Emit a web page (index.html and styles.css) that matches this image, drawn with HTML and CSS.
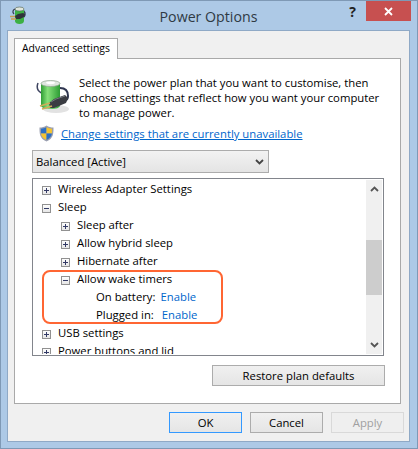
FILE: index.html
```html
<!DOCTYPE html>
<html lang="en">
<head>
    <meta charset="UTF-8">
    <title>Power Options</title>
    <link rel="stylesheet" href="styles.css">
</head>
<body>
    <div class="window">
        <div class="title-bar">
            <svg class="app-icon" width="18" height="18" viewBox="0 0 18 18">
                <path d="M6 3C4 4 3 6 5 8" fill="none" stroke="#3a3f55" stroke-width="1.3"/>
                <path d="M13 4c3 1 4 4 2 7" fill="none" stroke="#3a3f55" stroke-width="1.5"/>
                <path d="M6 3h9v12c0 2-2 3-4.500 3S6 17 6 15z" fill="#3cb043"/>
                <ellipse cx="10.500" cy="3" rx="4.500" ry="2" fill="#dfe5dc" stroke="#5f6f60" stroke-width=".7"/>
                <path d="M6 10l3-2 5-1 2 1-1 3-4 2H7z" fill="#2f3238"/>
                <path d="M1 10.500h5M2 13h5" stroke="#c8a050" stroke-width="1.300"/>
            </svg>
            <span class="title-text">Power Options</span>
            <span class="help-btn">?</span>
            <span class="close-btn">
                <svg width="9" height="9" viewBox="0 0 9 9"><path d="M1 1l7 7M8 1l-7 7" stroke="#fff" stroke-width="1.800"/></svg>
            </span>
        </div>

        <div class="client">
            <div class="tabs">
                <div class="tab">Advanced settings</div>
            </div>

            <div class="panel">
                <div class="intro">
                    <svg class="plan-icon" width="34" height="34" viewBox="0 0 34 34">
                        <defs>
                            <linearGradient id="batt" x1="0" x2="1" y1="0" y2="0">
                                <stop offset="0" stop-color="#2f9e35"/>
                                <stop offset=".35" stop-color="#86e07a"/>
                                <stop offset="1" stop-color="#2c9c34"/>
                            </linearGradient>
                        </defs>
                        <ellipse cx="20" cy="29" rx="13" ry="4" fill="#e2e2e2"/>
                        <path d="M2 3c-1.500 4-.5 8 3.500 10" fill="none" stroke="#3e4460" stroke-width="1.500"/>
                        <path d="M24 8c5 0 8 3 8 8 0 2-1 4-3 5" fill="none" stroke="#2f3650" stroke-width="2"/>
                        <path d="M5 3h19v22c0 3-4 4-9.500 4S5 28 5 25z" fill="url(#batt)"/>
                        <ellipse cx="14.500" cy="3.500" rx="9.500" ry="3" fill="#dfe6df" stroke="#8fa58f" stroke-width=".7"/>
                        <ellipse cx="14.500" cy="2.800" rx="4.500" ry="1.400" fill="#fff"/>
                        <path d="M13 23l5-4 11-4 3 3-2 5-12 5-4 0z" fill="#3a3c42"/>
                        <path d="M15 22l5-3 9-3" fill="none" stroke="#73777f" stroke-width="1"/>
                        <path d="M4 26l10-3M6 29l10-3" stroke="#d1ab58" stroke-width="1.800"/>
                    </svg>
                    <p class="intro-text">Select the power plan that you want to customise, then choose settings that reflect how you want your computer to manage power.</p>
                </div>

                <div class="uac-row">
                    <svg width="15" height="17" viewBox="0 0 15 17">
                        <path d="M7.500 .5C9.500 2 12 2.500 14.500 2.500c0 6 0 11-7 14-7-3-7-8-7-14C3 2.500 5.500 2 7.500 .5z" fill="#9a9fb0"/>
                        <path d="M7.500 2v6.500H2c0-2 0-3.500 0-4.800C4 3.600 6 3 7.500 2z" fill="#2b6fc4"/>
                        <path d="M7.500 2c1.500 1 3.500 1.600 5.500 1.700 0 1.300 0 2.800-.1 4.800H7.500z" fill="#f4c430"/>
                        <path d="M2 8.500h5.500V15C4 13.500 2.400 11.500 2 8.500z" fill="#f4c430"/>
                        <path d="M7.500 8.500h5.400c-.4 3-2 5-5.400 6.500z" fill="#2b6fc4"/>
                    </svg>
                    <a class="link" href="#">Change settings that are currently unavailable</a>
                </div>

                <div class="plan-select">
                    <span>Balanced [Active]</span>
                    <svg width="9" height="6" viewBox="0 0 9 6"><path d="M1 1l3.500 3.500L8 1" fill="none" stroke="#444" stroke-width="1.800"/></svg>
                </div>

                <div class="tree-box">
                    <div class="tree">
                        <div class="row"><i class="exp plus"></i>Wireless Adapter Settings</div>
                        <div class="row"><i class="exp minus"></i>Sleep</div>
                        <div class="row lvl2"><i class="exp plus"></i>Sleep after</div>
                        <div class="row lvl2"><i class="exp plus"></i>Allow hybrid sleep</div>
                        <div class="row lvl2"><i class="exp plus"></i>Hibernate after</div>
                        <div class="row lvl2"><i class="exp minus"></i>Allow wake timers</div>
                        <div class="row lvl3">On battery:<a class="value" href="#">Enable</a></div>
                        <div class="row lvl3">Plugged in:<a class="value value-wide" href="#">Enable</a></div>
                        <div class="row"><i class="exp plus"></i>USB settings</div>
                        <div class="row"><i class="exp plus"></i>Power buttons and lid</div>
                        <div class="callout"></div>
                    </div>
                    <div class="scrollbar">
                        <svg class="arrow" width="9" height="6" viewBox="0 0 9 6"><path d="M1 5l3.500-3.500L8 5" fill="none" stroke="#555" stroke-width="1.800"/></svg>
                        <div class="track"><div class="thumb"></div></div>
                        <svg class="arrow" width="9" height="6" viewBox="0 0 9 6"><path d="M1 1l3.500 3.500L8 1" fill="none" stroke="#555" stroke-width="1.800"/></svg>
                    </div>
                </div>

                <div class="restore-row">
                    <button class="btn restore">Restore plan defaults</button>
                </div>
            </div>

            <div class="actions">
                <button class="btn ok">OK</button>
                <button class="btn">Cancel</button>
                <button class="btn disabled">Apply</button>
            </div>
        </div>
    </div>
</body>
</html>
```

FILE: styles.css
```css
html, body {
    margin: 0;
    padding: 0;
}

body {
    font-family: 'Open Sans', 'Noto Sans', sans-serif;
    font-size: 11.3px;
    color: #000;
}

.window {
    box-sizing: border-box;
    width: 418px;
    height: 449px;
    background: #adc9e6;
    border: 1px solid #7f99b5;
    padding: 0 7px 6px 6px;
    display: flex;
    flex-direction: column;
}

/* Title bar */
.title-bar {
    height: 29px;
    display: flex;
    position: relative;
    justify-content: center;
    align-items: center;
    flex: none;
}

.app-icon {
    position: absolute;
    left: 2px;
    top: 5px;
}

.title-text {
    font-size: 14.2px;
    color: #2f3a44;
    margin-top: 1px;
}

.help-btn {
    position: absolute;
    right: 54px;
    top: 1px;
    font-size: 14px;
    font-weight: bold;
    color: #222;
}

.close-btn {
    position: absolute;
    right: -1px;
    top: 0;
    width: 45px;
    height: 20px;
    background: #c75050;
    display: flex;
    justify-content: center;
    align-items: center;
}

/* Dialog body */
.client {
    flex: 1;
    background: #f0f0f0;
    border: 1px solid #8fa9c6;
    padding: 7px 8px 0 6px;
    display: flex;
    flex-direction: column;
}

.tabs {
    display: flex;
    height: 20px;
    flex: none;
}

.tab {
    background: #fff;
    border: 1px solid #a9a9a9;
    border-bottom: 0;
    padding: 0 7px;
    font-size: 10.4px;
    line-height: 19px;
    position: relative;
    z-index: 1;
    height: 21px;
    box-sizing: border-box;
    width: 104px;
    white-space: nowrap;
}

.panel {
    box-sizing: border-box;
    height: 346px;
    background: #fff;
    border: 1px solid #a9a9a9;
    flex: none;
}

.intro {
    display: flex;
    padding: 16px 0 0 21px;
}

.plan-icon {
    flex: none;
    margin: 5px 9px 0 0;
    height: 34px;
}

.intro-text {
    margin: 0;
    width: 305px;
    line-height: 15px;
}

.uac-row {
    display: flex;
    align-items: center;
    gap: 7px;
    padding-left: 24px;
    margin-top: 4px;
    height: 19px;
}

.link {
    color: #0066cc;
}

.plan-select {
    box-sizing: border-box;
    width: 237px;
    height: 23px;
    margin: 7px 0 0 17px;
    background: linear-gradient(#f2f2f2, #e4e4e4);
    border: 1px solid #acacac;
    display: flex;
    align-items: center;
    justify-content: space-between;
    padding: 0 4px 0 3px;
}

.tree-box {
    box-sizing: border-box;
    width: 352px;
    height: 178px;
    margin: 5px 0 0 17px;
    border: 1px solid #82858c;
    display: flex;
    padding: 1px;
}

.tree {
    flex: 1;
    overflow: hidden;
    position: relative;
}

.row {
    height: 18px;
    line-height: 18px;
    padding-left: 24px;
    display: flex;
    align-items: center;
    white-space: nowrap;
    position: relative;
}

.lvl2 {
    padding-left: 43px;
}

.lvl3 {
    padding-left: 62px;
}

.value {
    color: #0066cc;
    text-decoration: none;
    margin-left: 5px;
}

.value-wide {
    margin-left: 8px;
}

.exp {
    box-sizing: border-box;
    width: 9px;
    height: 9px;
    background: linear-gradient(#fdfdfd, #e6e6e6);
    border: 1px solid #919191;
    margin: 2px 7px 0 -16px;
    position: relative;
    flex: none;
}

.exp::before {
    content: "";
    position: absolute;
    left: 1px;
    top: 3px;
    width: 5px;
    height: 1px;
    background: #333a66;
}

.plus::after {
    content: "";
    position: absolute;
    left: 3px;
    top: 1px;
    width: 1px;
    height: 5px;
    background: #333a66;
}

/* Orange highlight lying over the tree */
.callout {
    position: absolute;
    left: 8px;
    top: 90px;
    width: 177px;
    height: 50px;
    border: 2px solid #ff6633;
    border-radius: 8px;
}

.scrollbar {
    flex: none;
    width: 16px;
    background: #f0f0f0;
    display: flex;
    flex-direction: column;
    align-items: center;
}

.arrow {
    flex: none;
    margin: 6px 0;
}

.track {
    flex: 1;
    width: 100%;
    padding-top: 42px;
}

.thumb {
    height: 55px;
    background: #cdcdcd;
}

.restore-row {
    display: flex;
    justify-content: flex-end;
    padding: 9px 15px 0 0;
}

.btn {
    box-sizing: border-box;
    width: 73px;
    height: 21px;
    padding: 0;
    background: linear-gradient(#f0f0f0, #e5e5e5);
    border: 1px solid #acacac;
    font-family: inherit;
    font-size: 11.3px;
    color: #000;
}

.restore {
    width: 173px;
}

.actions {
    display: flex;
    justify-content: flex-end;
    gap: 8px;
    padding-top: 8px;
    margin-right: -3px;
}

.ok {
    border-color: #3399ff;
}

.disabled {
    background: #efefef;
    border-color: #d9d9d9;
    color: #a0a0a0;
}
```
